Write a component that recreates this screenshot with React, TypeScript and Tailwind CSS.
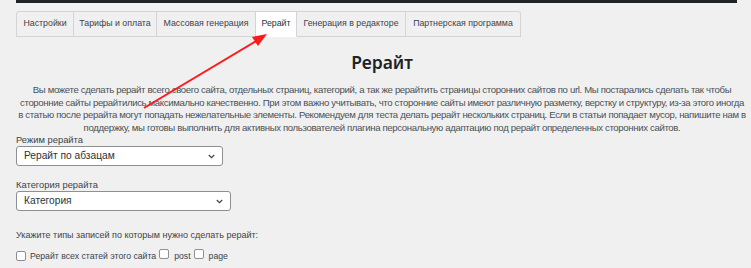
import React from "react";

const TABS = [
  { label: "Настройки", w: "w-[58px]" },
  { label: "Тарифы и оплата", w: "w-[83px]" },
  { label: "Массовая генерация", w: "w-[99px]" },
  { label: "Рерайт", w: "w-[41px]" },
  { label: "Генерация в редакторе", w: "w-[109px]" },
  { label: "Партнерская программа", w: "w-[115px]" },
];

const LINES = [
  "Вы можете сделать рерайт всего своего сайта, отдельных страниц, категорий, а так же рерайтить страницы сторонних сайтов по url. Мы постарались сделать так чтобы",
  "сторонние сайты рерайтились максимально качественно. При этом важно учитывать, что сторонние сайты имеют различную разметку, верстку и структуру, из-за этого иногда",
  "в статью после рерайта могут попадать нежелательные элементы. Рекомендуем для теста делать рерайт нескольких страниц. Если в статьи попадает мусор, напишите нам в",
  "поддержку, мы готовы выполнить для активных пользователей плагина персональную адаптацию под рерайт определенных сторонних сайтов.",
];

function Chevron() {
  return (
    <svg width="7" height="5" viewBox="0 0 7 5" className="shrink-0">
      <path d="M0.8 1l2.7 2.7L6.2 1" fill="none" stroke="#3c434a" strokeWidth="1.2" />
    </svg>
  );
}

function Select({ value, width }: { value: string; width: string }) {
  return (
    <div
      className={`${width} flex h-[20px] items-center justify-between rounded-[3px] border border-[#8c8f94] bg-white pl-[7px] pr-[7px] text-[10.2px] text-[#2c3338]`}
    >
      <span>{value}</span>
      <Chevron />
    </div>
  );
}

function Checkbox() {
  return (
    <span className="inline-block h-[10px] w-[10px] shrink-0 rounded-[2px] border border-[#8c8f94] bg-white" />
  );
}

export default function App() {
  return (
    <div
      className="relative h-[268px] w-[751px] overflow-hidden bg-[#f0f0f1] pl-4 text-[#3c434a]"
      style={{ fontFamily: "'Liberation Sans', Arial, sans-serif" }}
    >
      <div className="h-[3px] w-[721px] bg-[#1d2327]" />

      {/* Tabs */}
      <nav className="mt-[8px] flex">
        {TABS.map((t, i) => (
          <div
            key={t.label}
            className={`${t.w} flex h-[26px] items-center justify-center border-y border-r border-[#d3d4d6] text-[8.8px] ${
              i === 0 ? "border-l rounded-tl-[3px]" : ""
            } ${i === TABS.length - 1 ? "rounded-tr-[3px]" : ""} ${
              t.label === "Рерайт" ? "border-b-white bg-white text-[#2c3338]" : "bg-[#f0f0f1]"
            }`}
          >
            {t.label}
          </div>
        ))}
      </nav>

      <div className="w-[732px]">
        <h1
          className="mt-[12px] text-center text-[17.5px] font-semibold leading-[26px] text-[#1d2327]"
          style={{ fontFamily: "'Noto Sans', sans-serif" }}
        >
          Рерайт
        </h1>

        <div className="mt-[9px] flex flex-col items-center text-[9.6px] leading-[12.5px] tracking-[-0.35px] text-[#4a5056]">
          {LINES.map((l) => (
            <div key={l} className="whitespace-nowrap">
              {l}
            </div>
          ))}
        </div>
      </div>

      <div className="text-[9.4px] leading-[12px]">Режим рерайта</div>
      <Select value="Рерайт по абзацам" width="w-[207px]" />

      <div className="mt-[13px] text-[9.4px] leading-[12px]">Категория рерайта</div>
      <Select value="Категория" width="w-[215px]" />

      <div className="mt-[18px] text-[9px] leading-[12px]">
        Укажите типы записей по которым нужно сделать рерайт:
      </div>
      <div className="mt-[8px] flex items-center text-[8.7px] leading-[12px]">
        <Checkbox />
        <span className="ml-[4px]">Рерайт всех статей этого сайта</span>
        <span className="ml-[3px]"><Checkbox /></span>
        <span className="ml-[5px]">post</span>
        <span className="ml-[3px]"><Checkbox /></span>
        <span className="ml-[5px]">page</span>
      </div>

      {/* red arrow */}
      <svg
        className="pointer-events-none absolute left-0 top-0"
        width="751"
        height="268"
        viewBox="0 0 751 268"
      >
        <line x1="144" y1="108" x2="258" y2="40" stroke="#ff1a1a" strokeWidth="2" />
        <polygon points="267,34 252,37 258,46" fill="#ff1a1a" />
      </svg>
    </div>
  );
}
